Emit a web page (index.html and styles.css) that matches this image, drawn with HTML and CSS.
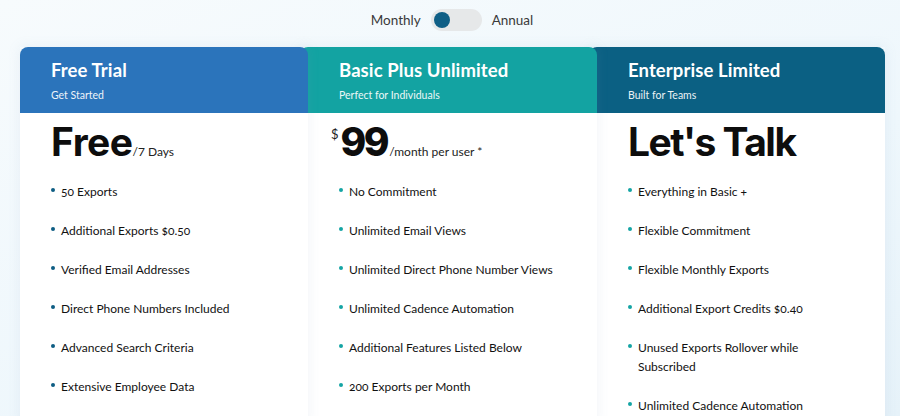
FILE: index.html
```html
<!DOCTYPE html>
<html>
<head>
<meta charset="utf-8">
<link rel="stylesheet" href="styles.css">
</head>
<body>
<div class="toggle-row">
  <span class="toggle-label">Monthly</span>
  <span class="switch"><span class="knob"></span></span>
  <span class="toggle-label">Annual</span>
</div>
<div class="plans">
  <div class="card card-1">
    <div class="head">
      <div class="title">Free Trial</div>
      <div class="sub">Get Started</div>
    </div>
    <div class="body">
      <div class="price"><span class="big">Free</span><span class="per">/7 Days</span></div>
      <ul class="features">
        <li>50 Exports</li>
        <li>Additional Exports $0.50</li>
        <li>Verified Email Addresses</li>
        <li>Direct Phone Numbers Included</li>
        <li>Advanced Search Criteria</li>
        <li>Extensive Employee Data</li>
      </ul>
    </div>
  </div>
  <div class="card card-2">
    <div class="head">
      <div class="title">Basic Plus Unlimited</div>
      <div class="sub">Perfect for Individuals</div>
    </div>
    <div class="body">
      <div class="price"><span class="cur">$</span><span class="big num">99</span><span class="per">/month per user *</span></div>
      <ul class="features">
        <li>No Commitment</li>
        <li>Unlimited Email Views</li>
        <li>Unlimited Direct Phone Number Views</li>
        <li>Unlimited Cadence Automation</li>
        <li>Additional Features Listed Below</li>
        <li>200 Exports per Month</li>
      </ul>
    </div>
  </div>
  <div class="card card-3">
    <div class="head">
      <div class="title">Enterprise Limited</div>
      <div class="sub">Built for Teams</div>
    </div>
    <div class="body">
      <div class="price"><span class="big talk">Let's Talk</span></div>
      <ul class="features">
        <li>Everything in Basic +</li>
        <li>Flexible Commitment</li>
        <li>Flexible Monthly Exports</li>
        <li>Additional Export Credits $0.40</li>
        <li>Unused Exports Rollover while Subscribed</li>
        <li>Unlimited Cadence Automation</li>
      </ul>
    </div>
  </div>
</div>
</body>
</html>
```
FILE: styles.css
```css
html, body {
  margin: 0;
  padding: 0;
}
body {
  width: 900px;
  height: 416px;
  overflow: hidden;
  background: linear-gradient(160deg, #f7fbfd 0%, #eef7fc 60%, #e6f2f9 100%);
  font-family: "Lato", "Noto Sans", sans-serif;
  color: #222;
}
.toggle-row {
  height: 38px;
  display: flex;
  align-items: center;
  justify-content: center;
  gap: 10px;
  padding-left: 4px;
  padding-top: 1px;
  box-sizing: border-box;
}
.toggle-label {
  font-size: 13.5px;
  color: #3a3a3a;
}
.switch {
  width: 51px;
  height: 22px;
  border-radius: 11px;
  background: #e6e8e9;
  display: flex;
  align-items: center;
  padding-left: 3px;
  box-sizing: border-box;
}
.knob {
  width: 16px;
  height: 16px;
  border-radius: 50%;
  background: #0f5f86;
}
.plans {
  display: flex;
  padding-left: 20px;
  margin-top: 9px;
  align-items: stretch;
}
.card {
  position: relative;
  display: flex;
  flex-direction: column;
  height: 380px;
  box-shadow: 0 0 12px rgba(120, 160, 190, 0.12);
}
.card-1 { width: 288px; z-index: 3; }
.card-2 { width: 297px; margin-left: -8px; z-index: 2; }
.card-3 { width: 296px; margin-left: -8px; z-index: 1; }
.head {
  height: 66px;
  box-sizing: border-box;
  padding: 12px 20px 0 31px;
  border-radius: 8px 8px 0 0;
  color: #fff;
}
.card-1 .head { background: #2b74bb; }
.card-2 .head { background: #13a3a2; }
.card-3 .head { background: #0b6083; }
.card-2 .head, .card-3 .head,
.card-2 .body, .card-3 .body { padding-left: 39px; }
.title {
  font-size: 18.5px;
  font-weight: 700;
  line-height: 22px;
  letter-spacing: 0.1px;
}
.sub {
  font-size: 10.5px;
  line-height: 14px;
  margin-top: 7px;
  opacity: 0.92;
}
.body {
  flex: 1;
  background: #fff;
  padding: 0 20px 0 31px;
}
.price {
  margin-top: 9px;
  height: 40px;
  line-height: 40px;
  display: flex;
  align-items: baseline;
  white-space: nowrap;
}
.big {
  font-family: "Inter", sans-serif;
  font-weight: 700;
  font-size: 39px;
  letter-spacing: -0.5px;
  color: #0d0d0d;
}
.big.num {
  font-weight: 800;
  letter-spacing: -2.5px;
}
.big.talk {
  letter-spacing: -1.5px;
}
.per {
  font-size: 12px;
  color: #222;
  margin-left: 0;
}
.card-2 .per { margin-left: 2px; }
.cur {
  font-size: 13px;
  align-self: flex-start;
  line-height: 14px;
  margin-top: 5px;
  margin-left: -8px;
  margin-right: 2px;
}
.features {
  list-style: none;
  margin: 0;
  padding: 20px 0 0 0;
  display: flex;
  flex-direction: column;
  gap: 20px;
}
.features li {
  position: relative;
  padding-left: 10px;
  font-size: 12px;
  line-height: 19px;
  color: #111;
  font-variant-numeric: oldstyle-nums;
  max-width: 190px;
}
.card-2 .features li { max-width: 230px; }
.features li::before {
  content: "";
  position: absolute;
  left: 0;
  top: 6px;
  width: 4px;
  height: 4px;
  border-radius: 50%;
  background: #14a4a4;
}
.card-1 .features li::before { background: #0d5d83; }
```
